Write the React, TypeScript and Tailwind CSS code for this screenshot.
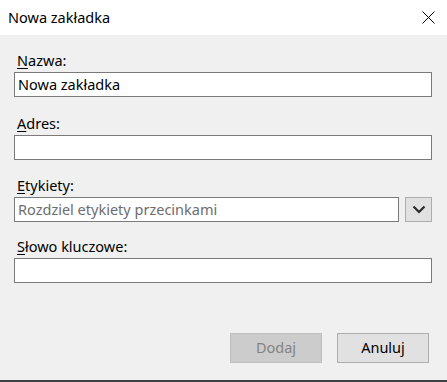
import React from 'react';

const FONT = { fontFamily: '"Noto Sans", "Liberation Sans", sans-serif' };

interface FieldProps {
  label: string;
  accessKey: string;
  value?: string;
  placeholder?: string;
  className?: string;
  withDropdown?: boolean;
}

// Pole formularza z podkreśloną literą skrótu
const Field: React.FC<FieldProps> = ({ label, accessKey, value, placeholder, className = '', withDropdown = false }) => (
  <div className={`flex flex-col ${className}`}>
    <label className="pl-[3px] text-[14.5px] leading-[20px] text-black mb-[2px]">
      <span className="underline underline-offset-2">{accessKey}</span>
      {label.slice(accessKey.length)}
    </label>
    <div className="flex items-stretch gap-[6px]">
      <div className="flex-1 h-[25px] bg-white border border-[#7a7a7a] flex items-center px-[3px] text-[14.5px]">
        {value ? (
          <span className="text-black">{value}</span>
        ) : (
          <span className="text-[#6d6d6d]">{placeholder}</span>
        )}
      </div>
      {withDropdown && (
        <div className="w-[27px] h-[25px] bg-[#e1e1e1] border border-[#adadad] flex items-center justify-center">
          <svg width="14" height="9" viewBox="0 0 14 9">
            <path d="M1.5 1.5 L7 7 L12.5 1.5" fill="none" stroke="#2b2b2b" strokeWidth="2.2" />
          </svg>
        </div>
      )}
    </div>
  </div>
);

export default function App() {
  return (
    <div className="w-[447px] h-[382px] flex flex-col bg-[#f0f0f0] overflow-hidden" style={FONT}>
      {/* Pasek tytułu */}
      <div className="h-[35px] bg-white flex items-center justify-between pl-[8px] pr-[12px]">
        <span className="text-[14.5px] text-black">Nowa zakładka</span>
        <svg width="13" height="13" viewBox="0 0 13 13">
          <path d="M0.5 0.5 L12.5 12.5 M12.5 0.5 L0.5 12.5" stroke="#000" strokeWidth="1" />
        </svg>
      </div>

      {/* Treść okna */}
      <div className="flex-1 flex flex-col px-[14px] pr-[15px] pt-[15px]">
        <Field label="Nazwa:" accessKey="N" value="Nowa zakładka" />
        <Field label="Adres:" accessKey="A" className="mt-[16px]" />
        <Field
          label="Etykiety:"
          accessKey="E"
          placeholder="Rozdziel etykiety przecinkami"
          className="mt-[15px]"
          withDropdown
        />
        <Field label="Słowo kluczowe:" accessKey="S" className="mt-[14px]" />

        <div className="mt-auto mb-[17px] flex justify-end gap-[15px] pr-[3px]">
          <div className="w-[92px] h-[30px] bg-[#cccccc] border border-[#bfbfbf] flex items-center justify-center text-[14.5px] text-[#838383]">
            Dodaj
          </div>
          <div className="w-[92px] h-[30px] bg-[#e1e1e1] border border-[#adadad] flex items-center justify-center text-[14.5px] text-black">
            Anuluj
          </div>
        </div>
      </div>

      {/* Pasek zadań w tle */}
      <div className="h-[2px] bg-[#3c4045]" />
    </div>
  );
}
